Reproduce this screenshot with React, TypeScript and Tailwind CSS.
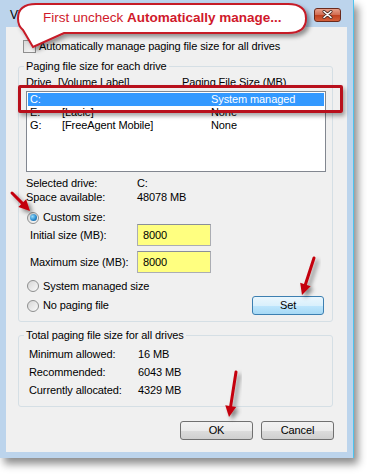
import React from "react";

type ArrowProps = { x1: number; y1: number; x2: number; y2: number };

// red annotation arrow, head drawn at (x2, y2)
function Arrow({ x1, y1, x2, y2 }: ArrowProps) {
  const len = Math.hypot(x2 - x1, y2 - y1);
  const dx = (x2 - x1) / len;
  const dy = (y2 - y1) / len;
  const hl = 11;
  const hw = 5.5;
  const bx = x2 - dx * hl;
  const by = y2 - dy * hl;
  const pts = `${x2},${y2} ${bx - dy * hw},${by + dx * hw} ${bx + dy * hw},${by - dx * hw}`;
  return (
    <g filter="url(#shadow)">
      <line x1={x1} y1={y1} x2={bx + dx * 2} y2={by + dy * 2} stroke="#c4000c" strokeWidth={3} strokeLinecap="round" />
      <polygon points={pts} fill="#c4000c" />
    </g>
  );
}

function Radio({ checked }: { checked?: boolean }) {
  return (
    <span className="w-[12px] h-[12px] rounded-full border border-[#8e8f8f] bg-[linear-gradient(135deg,#d6d6d6,#fafafa)] flex items-center justify-center shrink-0">
      {checked && (
        <span className="w-[7px] h-[7px] rounded-full bg-[radial-gradient(circle_at_35%_35%,#9be0ff,#2a8ccf_55%,#0e4f86)]" />
      )}
    </span>
  );
}

function Btn({ label, hot }: { label: string; hot?: boolean }) {
  return (
    <div
      className={
        hot
          ? "h-[19px] w-[72px] rounded-[3px] border border-[#3c7fb1] bg-[linear-gradient(#eaf6fd_0%,#d9f0fc_50%,#bee6fd_50%,#a7d9f5_100%)] flex items-center justify-center"
          : "h-[19px] w-[73px] rounded-[3px] border border-[#707070] bg-[linear-gradient(#f2f2f2_0%,#ebebeb_50%,#dddddd_50%,#cfcfcf_100%)] flex items-center justify-center"
      }
    >
      {label}
    </div>
  );
}

export default function App() {
  const drives = [
    { d: "C:", label: "", size: "System managed", sel: true },
    { d: "E:", label: "[Lacie]", size: "None" },
    { d: "G:", label: "[FreeAgent Mobile]", size: "None" },
  ];

  return (
    <div className="w-[367px] h-[474px] bg-white relative overflow-hidden font-['Liberation_Sans',Arial,sans-serif] text-[11px] tracking-[-0.1px] text-black">
      {/* window */}
      <div className="w-[354px] h-[458px] bg-[#bcd4ec] border-r border-[#4cc3ee] shadow-[4px_6px_8px_rgba(0,0,0,0.45)] flex flex-col">
        <div className="h-[27px] flex items-center pl-[10px] pr-[12px] pt-[2px]">
          <span className="text-[12px]">Virtual Memory</span>
          <div className="ml-auto w-[27px] h-[14px] rounded-[3px] border border-[#6b2a1c] bg-[linear-gradient(#e8a08a_0%,#d06a50_50%,#c0401f_51%,#d4603c_100%)] flex items-center justify-center">
            <svg width="11" height="9" viewBox="0 0 11 9">
              <path d="M2 1.5 L9 7.5 M9 1.5 L2 7.5" stroke="#4a2a22" strokeWidth="3" strokeLinecap="round" />
              <path d="M2 1.5 L9 7.5 M9 1.5 L2 7.5" stroke="#ffffff" strokeWidth="1.6" strokeLinecap="round" />
            </svg>
          </div>
        </div>

        <div className="mx-[6px] h-[425px] bg-[#f0f0f0] flex flex-col">
          {/* auto manage checkbox */}
          <div className="mt-[13px] h-[13px] ml-[17px] flex items-center gap-[3px]">
            <span className="w-[13px] h-[13px] border border-[#8f8f8f] bg-[linear-gradient(135deg,#d8d8d8,#fbfbfb)] shrink-0" />
            <span className="leading-[13px]">Automatically manage paging file size for all drives</span>
          </div>

          {/* paging file per drive */}
          <fieldset className="mt-[7px] ml-[12px] mr-[14px] border border-[#d5dfe5] rounded-[3px] pl-[7px] pr-[6px] pb-[6px]">
            <legend className="-ml-[2px] px-[2px] leading-[12px]">Paging file size for each drive</legend>
            <div className="h-[19px] pt-[3px] flex leading-[14px]">
              <span className="w-[32px]">Drive</span>
              <span className="w-[124px]">[Volume Label]</span>
              <span>Paging File Size (MB)</span>
            </div>
            <div className="h-[81px] border border-[#828790] bg-white p-[1px]">
              {drives.map((r) => (
                <div
                  key={r.d}
                  className={
                    r.sel
                      ? "h-[13px] leading-[13px] flex bg-[#3399ff] text-white"
                      : "h-[13px] leading-[13px] flex"
                  }
                >
                  <span className="w-[34px] pl-[2px]">{r.d}</span>
                  <span className="w-[149px]">{r.label}</span>
                  <span>{r.size}</span>
                </div>
              ))}
            </div>

            <div className="mt-[4px] h-[14px] leading-[14px] flex">
              <span className="w-[111px]">Selected drive:</span>
              <span>C:</span>
            </div>
            <div className="h-[14px] leading-[14px] flex">
              <span className="w-[111px]">Space available:</span>
              <span>48078 MB</span>
            </div>

            <div className="mt-[7px] h-[13px] flex items-center gap-[4px] ml-[1px]">
              <Radio checked />
              <span>Custom size:</span>
            </div>
            <div className="h-[22px] flex items-center">
              <span className="w-[107px] pl-[4px] box-content">Initial size (MB):</span>
              <div className="w-[74px] h-[22px] border border-[#abadb3] border-t-[#8a8f99] bg-[#ffff80] pl-[5px] flex items-center">8000</div>
            </div>
            <div className="mt-[5px] h-[22px] flex items-center">
              <span className="w-[107px] pl-[4px] box-content">Maximum size (MB):</span>
              <div className="w-[74px] h-[22px] border border-[#abadb3] border-t-[#8a8f99] bg-[#ffff80] pl-[5px] flex items-center">8000</div>
            </div>

            <div className="mt-[6px] h-[14px] flex items-center gap-[4px] ml-[1px]">
              <Radio />
              <span>System managed size</span>
            </div>
            <div className="mt-[3px] h-[19px] flex items-center gap-[4px] ml-[1px]">
              <Radio />
              <span>No paging file</span>
              <div className="ml-auto mr-[2px]">
                <Btn label="Set" hot />
              </div>
            </div>
          </fieldset>

          {/* totals */}
          <fieldset className="mt-[7px] ml-[12px] mr-[14px] border border-[#d5dfe5] rounded-[3px] pl-[10px] pr-[6px] pb-[7px]">
            <legend className="-ml-[5px] px-[2px] leading-[12px]">Total paging file size for all drives</legend>
            <div className="mt-[4px]">
              {[
                ["Minimum allowed:", "16 MB"],
                ["Recommended:", "6043 MB"],
                ["Currently allocated:", "4329 MB"],
              ].map(([k, v]) => (
                <div key={k} className="h-[18px] flex items-center">
                  <span className="w-[109px]">{k}</span>
                  <span>{v}</span>
                </div>
              ))}
            </div>
          </fieldset>

          <div className="mt-[14px] flex justify-end gap-[8px] pr-[13px]">
            <Btn label="OK" />
            <Btn label="Cancel" />
          </div>
        </div>
      </div>

      {/* callout */}
      <div className="absolute left-0 top-0 w-[320px] h-[56px] pointer-events-none">
        <svg width="320" height="56" className="absolute inset-0">
          <defs>
            <filter id="bubbleShadow" x="-10%" y="-30%" width="130%" height="170%">
              <feDropShadow dx="3" dy="3" stdDeviation="2" floodColor="#000" floodOpacity="0.4" />
            </filter>
          </defs>
          <path
            d="M36 4 H288 Q306 4 306 18.5 Q306 33 288 33 H64 L33 47 L23 30 Q18 26 18 18.5 Q18 4 36 4 Z"
            fill="#ffffff"
            stroke="#c61a28"
            strokeWidth="2"
            filter="url(#bubbleShadow)"
          />
        </svg>
        <div className="absolute left-[43px] top-[9px] h-[18px] leading-[18px] text-[13.5px] tracking-normal text-[#d0192b] whitespace-nowrap">
          First uncheck <b>Automatically manage...</b>
        </div>
      </div>

      {/* highlight box around C: */}
      <div className="absolute left-[18px] top-[85px] w-[325px] h-[28px] border-[3px] border-[#b8101c] rounded-[2px] shadow-[2px_3px_4px_rgba(0,0,0,0.35)] pointer-events-none" />

      {/* arrows */}
      <svg width="367" height="474" className="absolute inset-0 pointer-events-none">
        <defs>
          <filter id="shadow" x="-50%" y="-50%" width="200%" height="200%">
            <feDropShadow dx="3" dy="3" stdDeviation="2" floodColor="#000" floodOpacity="0.45" />
          </filter>
        </defs>
        <Arrow x1={12} y1={193} x2={30} y2={211} />
        <Arrow x1={314} y1={258} x2={302} y2={295} />
        <Arrow x1={236} y1={372} x2={229} y2={417} />
      </svg>
    </div>
  );
}
